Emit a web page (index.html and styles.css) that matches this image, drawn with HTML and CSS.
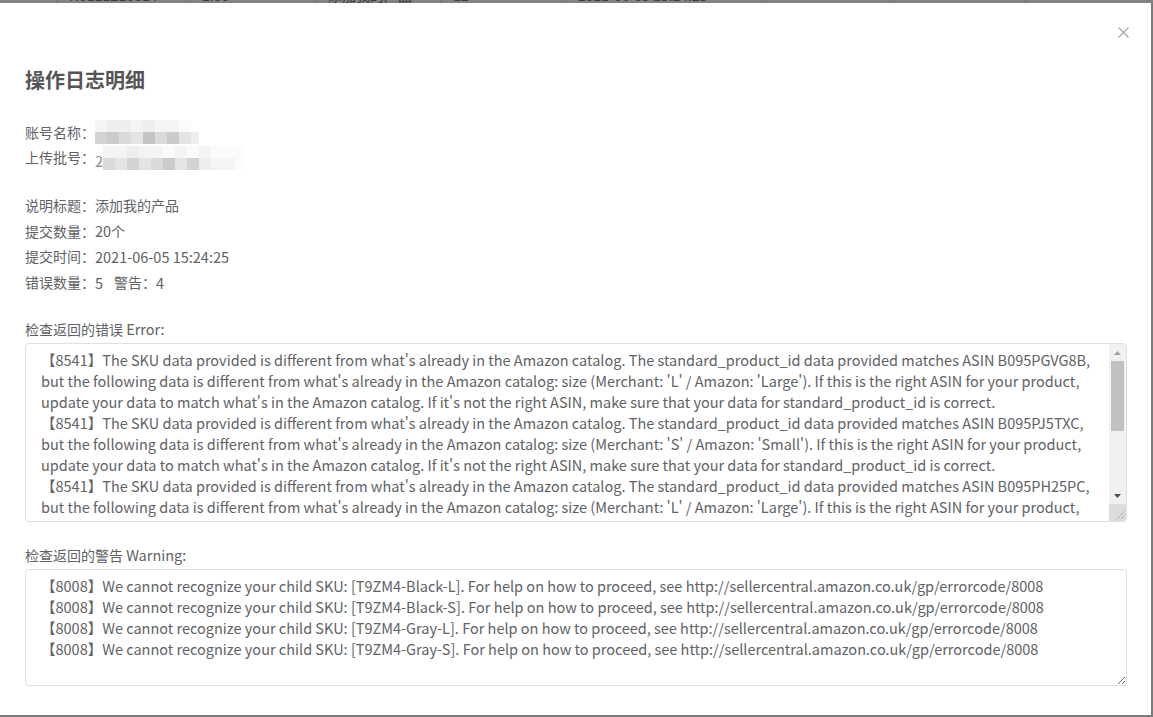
FILE: index.html
```html
<!DOCTYPE html>
<html lang="zh-CN">
<head>
<meta charset="utf-8">
<title>操作日志明细</title>
<link rel="stylesheet" href="styles.css">
</head>
<body>
<div class="backdrop-strip" aria-hidden="true">
  <div class="bg-row">
    <span class="bg-cell w57"></span>
    <span class="bg-cell w133">N0111Z10014</span>
    <span class="bg-cell w126">1.00</span>
    <span class="bg-cell w125">添加我的产品</span>
    <span class="bg-cell w125">12</span>
    <span class="bg-cell w200">2021-06-05 15:24:25</span>
    <span class="bg-cell w125"></span>
    <span class="bg-cell w135"></span>
  </div>
</div>
<div class="dialog">
  <button class="close" aria-label="关闭">
    <svg width="11" height="11" viewBox="0 0 11 11"><path d="M0.5 0.5L10.5 10.5M10.5 0.5L0.5 10.5" stroke="#a0a3a9" stroke-width="1.1" fill="none"/></svg>
  </button>
  <h2 class="title">操作日志明细</h2>

  <div class="group first">
    <div class="row"><span class="label">账号名称：</span>
      <span class="mosaic m-account">
        <span class="mrow"><i class="s1"></i><i class="s2"></i><i class="s2"></i><i class="s1"></i><i class="s2"></i><i class="s1"></i><i class="s1"></i><i class="s0"></i></span>
        <span class="mrow"><i class="s5"></i><i class="s6"></i><i class="s4"></i><i class="s3"></i><i class="s7"></i><i class="s4"></i><i class="s6"></i><i class="s3"></i><i class="s2 half"></i></span>
      </span>
    </div>
    <div class="row"><span class="label">上传批号：</span><span class="peek">2</span>
      <span class="mosaic m-batch">
        <span class="mrow"><i class="s1"></i><i class="s1"></i><i class="s2"></i><i class="s1"></i><i class="s1"></i><i class="s0"></i><i class="s1"></i><i class="s0"></i><i class="s1"></i><i class="s0"></i><i class="s0"></i><i class="s0 half"></i></span>
        <span class="mrow"><i class="s4"></i><i class="s3"></i><i class="s5"></i><i class="s3"></i><i class="s4"></i><i class="s6"></i><i class="s3"></i><i class="s5"></i><i class="s2"></i><i class="s1"></i><i class="s1"></i><i class="s0 half"></i></span>
      </span>
    </div>
  </div>

  <div class="group second">
    <div class="row"><span class="label">说明标题：</span><span class="value">添加我的产品</span></div>
    <div class="row"><span class="label">提交数量：</span><span class="value"><span class="latin">20</span>个</span></div>
    <div class="row"><span class="label">提交时间：</span><span class="value latin">2021-06-05 15:24:25</span></div>
    <div class="row"><span class="label">错误数量：</span><span class="value latin">5</span><span class="label warn-label">警告：</span><span class="value latin">4</span></div>
  </div>

  <div class="field field-error">
    <div class="field-label">检查返回的错误 <span class="latin">Error:</span></div>
    <div class="scroll-wrap">
      <textarea class="box box-error" readonly>【8541】The SKU data provided is different from what's already in the Amazon catalog. The standard_product_id data provided matches ASIN B095PGVG8B,
but the following data is different from what's already in the Amazon catalog: size (Merchant: 'L' / Amazon: 'Large'). If this is the right ASIN for your product,
update your data to match what's in the Amazon catalog. If it's not the right ASIN, make sure that your data for standard_product_id is correct.
【8541】The SKU data provided is different from what's already in the Amazon catalog. The standard_product_id data provided matches ASIN B095PJ5TXC,
but the following data is different from what's already in the Amazon catalog: size (Merchant: 'S' / Amazon: 'Small'). If this is the right ASIN for your product,
update your data to match what's in the Amazon catalog. If it's not the right ASIN, make sure that your data for standard_product_id is correct.
【8541】The SKU data provided is different from what's already in the Amazon catalog. The standard_product_id data provided matches ASIN B095PH25PC,
but the following data is different from what's already in the Amazon catalog: size (Merchant: 'L' / Amazon: 'Large'). If this is the right ASIN for your product,
update your data to match what's in the Amazon catalog. If it's not the right ASIN, make sure that your data for standard_product_id is correct.
【8541】The SKU data provided is different from what's already in the Amazon catalog. The standard_product_id data provided matches ASIN B095PJ8K2M,
but the following data is different from what's already in the Amazon catalog: size (Merchant: 'S' / Amazon: 'Small'). If this is the right ASIN for your product,
update your data to match what's in the Amazon catalog. If it's not the right ASIN, make sure that your data for standard_product_id is correct.
【8541】The SKU data provided is different from what's already in the Amazon catalog. The standard_product_id data provided matches ASIN B095PGX4RK,
but the following data is different from what's already in the Amazon catalog: size (Merchant: 'M' / Amazon: 'Medium'). If this is the right ASIN for your product,
update your data to match what's in the Amazon catalog. If it's not the right ASIN, make sure that your data for standard_product_id is correct.</textarea>
      <div class="vscroll" aria-hidden="true">
        <div class="sb-btn sb-up"><svg width="7" height="4" viewBox="0 0 7 4"><path d="M0 4L3.5 0L7 4z" fill="#a3a3a3"/></svg></div>
        <div class="sb-track"><div class="sb-thumb"></div></div>
        <div class="sb-btn sb-down"><svg width="7" height="4" viewBox="0 0 7 4"><path d="M0 0L3.5 4L7 0z" fill="#505050"/></svg></div>
        <div class="sb-corner"><svg width="17" height="17" viewBox="0 0 17 17"><path d="M15.5 7.5L7.5 15.5M15.5 11.5L11.5 15.5" stroke="#8c8c8c" stroke-width="1" stroke-dasharray="1 1" fill="none"/></svg></div>
      </div>
    </div>
  </div>

  <div class="field">
    <div class="field-label">检查返回的警告 <span class="latin">Warning:</span></div>
    <textarea class="box box-warn" readonly>【8008】We cannot recognize your child SKU: [T9ZM4-Black-L]. For help on how to proceed, see http://sellercentral.amazon.co.uk/gp/errorcode/8008
【8008】We cannot recognize your child SKU: [T9ZM4-Black-S]. For help on how to proceed, see http://sellercentral.amazon.co.uk/gp/errorcode/8008
【8008】We cannot recognize your child SKU: [T9ZM4-Gray-L]. For help on how to proceed, see http://sellercentral.amazon.co.uk/gp/errorcode/8008
【8008】We cannot recognize your child SKU: [T9ZM4-Gray-S]. For help on how to proceed, see http://sellercentral.amazon.co.uk/gp/errorcode/8008</textarea>
  </div>
</div>
</body>
</html>
```

FILE: styles.css
```css
html, body {
  margin: 0;
  padding: 0;
}

body {
  background: #7b7b7b;
  width: 1153px;
  height: 717px;
  overflow: hidden;
  font-family: "Noto Sans CJK SC", "Noto Sans", sans-serif;
  color: #606266;
}

.backdrop-strip {
  height: 3px;
  overflow: hidden;
  background: #828282;
}

.bg-row {
  display: flex;
  height: 14px;
  margin-top: -11px;
  font-size: 14px;
  line-height: 12px;
  color: #3a3b3d;
  white-space: nowrap;
}

.bg-cell {
  flex: none;
  box-sizing: border-box;
  height: 14px;
  padding-left: 12px;
  border-right: 1px solid #747474;
  overflow: hidden;
}

.w57 { width: 57px; }
.w125 { width: 125px; }
.w126 { width: 126px; }
.w133 { width: 133px; }
.w135 { width: 135px; }
.w200 { width: 200px; }

.dialog {
  position: relative;
  width: 1151px;
  height: 712px;
  background: #fff;
  box-sizing: border-box;
  padding: 0 24px 0 25px;
  overflow: hidden;
}

.close {
  position: absolute;
  top: 24px;
  right: 22px;
  width: 11px;
  height: 11px;
  padding: 0;
  border: 0;
  background: transparent;
  display: block;
}

.close svg {
  display: block;
}

.title {
  margin: 65px 0 0;
  font-size: 20px;
  line-height: 24px;
  font-weight: bold;
  color: #555;
}

.latin {
  font-size: 14.5px;
}

.group {
  font-size: 14px;
}

.group.first {
  margin-top: 28px;
}

.group.first .row {
  height: 25px;
  line-height: 25px;
}

.group.second {
  margin-top: 23px;
}

.group.second .row {
  height: 25.6px;
  line-height: 25.6px;
}

.row {
  display: flex;
  align-items: center;
  white-space: nowrap;
}

.label {
  width: 70px;
  flex: none;
}

.warn-label {
  width: auto;
  margin-left: 11px;
}

.peek {
  font-size: 14.5px;
  color: #8a8c90;
  line-height: 16px;
  margin-top: 6px;
}

.mosaic {
  display: flex;
  flex-direction: column;
}

.mrow {
  display: flex;
  height: 12px;
}

.mrow i {
  display: block;
  width: 12px;
  height: 12px;
}

.mrow i.half {
  width: 8px;
}

.m-account {
  margin-top: -1px;
}

.m-batch {
  margin-top: 1px;
}

.s0 { background: #fbfbfb; }
.s1 { background: #f4f4f4; }
.s2 { background: #eeeeee; }
.s3 { background: #e4e4e4; }
.s4 { background: #dadada; }
.s5 { background: #d3d3d3; }
.s6 { background: #cbcbcb; }
.s7 { background: #c4c4c4; }

.field {
  margin-top: 23px;
}

.field-error {
  margin-top: 24px;
}

.field-label {
  font-size: 14px;
  line-height: 20px;
  margin-bottom: 4px;
}

.scroll-wrap {
  position: relative;
}

.box {
  display: block;
  width: 100%;
  box-sizing: border-box;
  margin: 0;
  padding: 5px 15px;
  border: 1px solid #dcdfe6;
  border-radius: 4px;
  font-family: "Noto Sans CJK SC", "Noto Sans", sans-serif;
  font-size: 14.5px;
  line-height: 21px;
  color: #606266;
  background: #fff;
  outline: none;
  white-space: pre-wrap;
  overflow: hidden;
}

.box-error {
  height: 179px;
  padding-right: 20px;
  resize: vertical;
}

.box-warn {
  height: 117px;
  resize: both;
}

.vscroll {
  position: absolute;
  top: 1px;
  right: 1px;
  bottom: 1px;
  width: 17px;
  display: flex;
  flex-direction: column;
  background: #f1f1f1;
  border-radius: 0 3px 3px 0;
  overflow: hidden;
}

.sb-btn {
  height: 17px;
  flex: none;
  display: flex;
  align-items: center;
  justify-content: center;
}

.sb-btn svg {
  display: block;
}

.sb-track {
  flex: 1;
  padding: 0 2px;
}

.sb-thumb {
  height: 70px;
  background: #c1c1c1;
}

.sb-corner {
  height: 17px;
  flex: none;
  background: #dcdcdc;
}

.sb-corner svg {
  display: block;
}
```
